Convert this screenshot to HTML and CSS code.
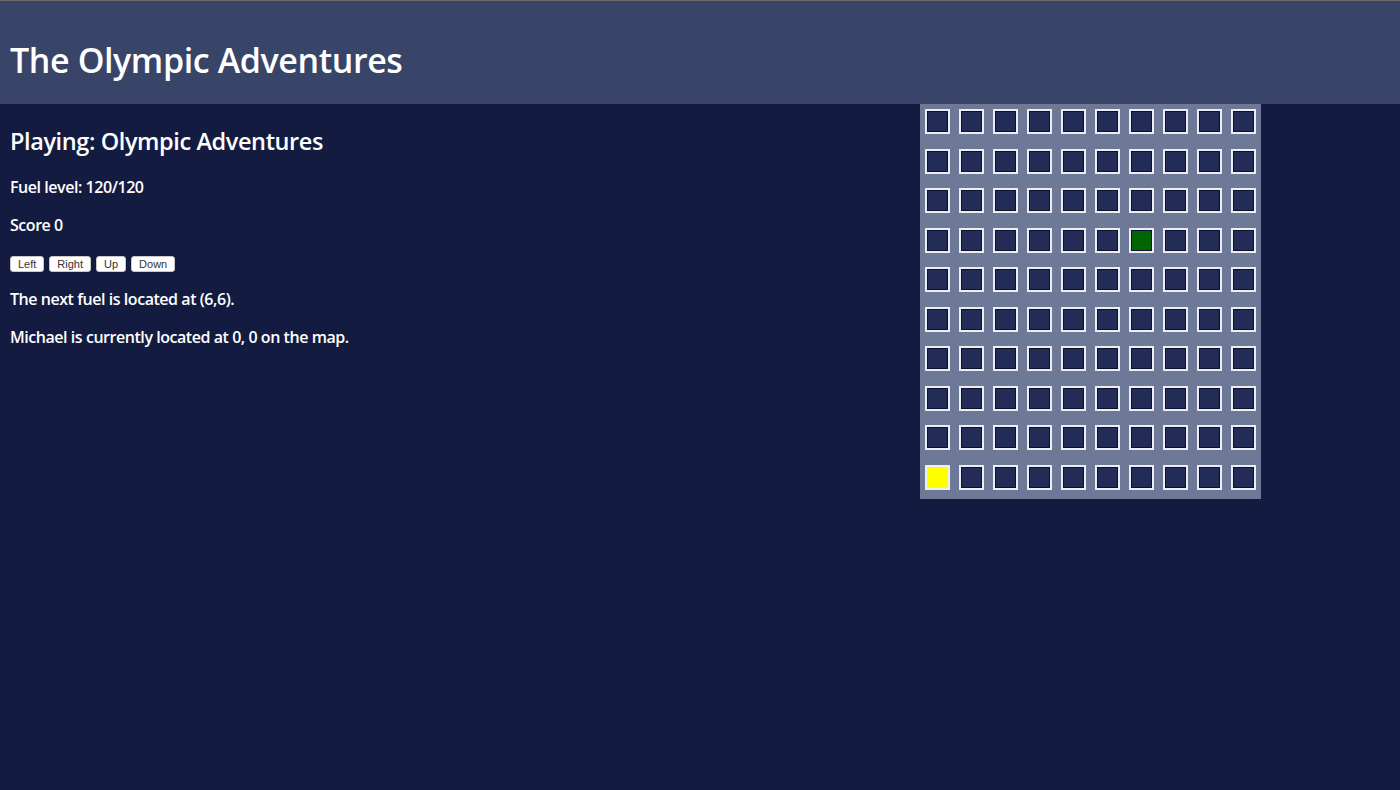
FILE: index.html
```html
<!DOCTYPE html>
<html lang="en">
<head>
<meta charset="utf-8">
<title>The Olympic Adventures</title>
<link rel="stylesheet" href="styles.css">
</head>
<body>
<header class="topbar">
  <h1 class="title">The Olympic Adventures</h1>
</header>
<main class="game">
  <section class="info">
    <h2 class="playing">Playing: Olympic Adventures</h2>
    <p class="line">Fuel level: 120/120</p>
    <p class="line">Score 0</p>
    <div class="controls">
      <button class="ctrl">Left</button>
      <button class="ctrl">Right</button>
      <button class="ctrl">Up</button>
      <button class="ctrl">Down</button>
    </div>
    <p class="line">The next fuel is located at (6,6).</p>
    <p class="line">Michael is currently located at 0, 0 on the map.</p>
  </section>
  <section class="board">
    <div class="cell"></div><div class="cell"></div><div class="cell"></div><div class="cell"></div><div class="cell"></div><div class="cell"></div><div class="cell"></div><div class="cell"></div><div class="cell"></div><div class="cell"></div>
    <div class="cell"></div><div class="cell"></div><div class="cell"></div><div class="cell"></div><div class="cell"></div><div class="cell"></div><div class="cell"></div><div class="cell"></div><div class="cell"></div><div class="cell"></div>
    <div class="cell"></div><div class="cell"></div><div class="cell"></div><div class="cell"></div><div class="cell"></div><div class="cell"></div><div class="cell"></div><div class="cell"></div><div class="cell"></div><div class="cell"></div>
    <div class="cell"></div><div class="cell"></div><div class="cell"></div><div class="cell"></div><div class="cell"></div><div class="cell"></div><div class="cell fuel"></div><div class="cell"></div><div class="cell"></div><div class="cell"></div>
    <div class="cell"></div><div class="cell"></div><div class="cell"></div><div class="cell"></div><div class="cell"></div><div class="cell"></div><div class="cell"></div><div class="cell"></div><div class="cell"></div><div class="cell"></div>
    <div class="cell"></div><div class="cell"></div><div class="cell"></div><div class="cell"></div><div class="cell"></div><div class="cell"></div><div class="cell"></div><div class="cell"></div><div class="cell"></div><div class="cell"></div>
    <div class="cell"></div><div class="cell"></div><div class="cell"></div><div class="cell"></div><div class="cell"></div><div class="cell"></div><div class="cell"></div><div class="cell"></div><div class="cell"></div><div class="cell"></div>
    <div class="cell"></div><div class="cell"></div><div class="cell"></div><div class="cell"></div><div class="cell"></div><div class="cell"></div><div class="cell"></div><div class="cell"></div><div class="cell"></div><div class="cell"></div>
    <div class="cell"></div><div class="cell"></div><div class="cell"></div><div class="cell"></div><div class="cell"></div><div class="cell"></div><div class="cell"></div><div class="cell"></div><div class="cell"></div><div class="cell"></div>
    <div class="cell player"></div><div class="cell"></div><div class="cell"></div><div class="cell"></div><div class="cell"></div><div class="cell"></div><div class="cell"></div><div class="cell"></div><div class="cell"></div><div class="cell"></div>
  </section>
</main>
</body>
</html>
```

FILE: styles.css
```css
html, body {
  margin: 0;
  padding: 0;
}
body {
  background: #131c40;
  color: #ffffff;
  font-family: "Open Sans", "Noto Sans", sans-serif;
  min-height: 790px;
  border-top: 1px solid #6b6b6b;
}
.topbar {
  background: #384468;
  height: 103px;
  display: flex;
  align-items: center;
  padding: 0 10px;
}
.title {
  margin: 0;
  font-size: 34px;
  font-weight: 600;
  letter-spacing: -0.4px;
  padding-top: 14px;
}
.game {
  display: flex;
  align-items: flex-start;
}
.info {
  flex: 1;
  padding: 0 10px;
}
.playing {
  margin: 21px 0 0;
  font-size: 23.5px;
  font-weight: 600;
  letter-spacing: -0.4px;
  line-height: 32px;
}
.line {
  margin: 16px 0 0;
  font-size: 16px;
  font-weight: 600;
  line-height: 22px;
  letter-spacing: -0.45px;
}
.playing + .line {
  margin-top: 19px;
}
.controls {
  display: flex;
  gap: 5px;
  margin-top: 20px;
  height: 16px;
}
.ctrl {
  background: #ffffff;
  color: #333333;
  border: 1px solid #c9c9c9;
  border-radius: 3px;
  font-family: "Liberation Sans", Arial, sans-serif;
  font-size: 11px;
  padding: 0 7px;
  height: 16px;
  line-height: 14px;
}
.board {
  margin-right: 139px;
  background: #6e7897;
  padding: 5px 5px 9px;
  display: grid;
  grid-template-columns: repeat(10, 25px);
  grid-auto-rows: 25px;
  column-gap: 9px;
  row-gap: 14.5px;
}
.cell {
  box-sizing: border-box;
  border: 2px solid #eceef4;
  box-shadow: inset 0 0 0 1px #0c1130;
  background: #232c57;
}
.cell.fuel {
  background: #006400;
}
.cell.player {
  background: #ffff00;
  box-shadow: none;
}
```
